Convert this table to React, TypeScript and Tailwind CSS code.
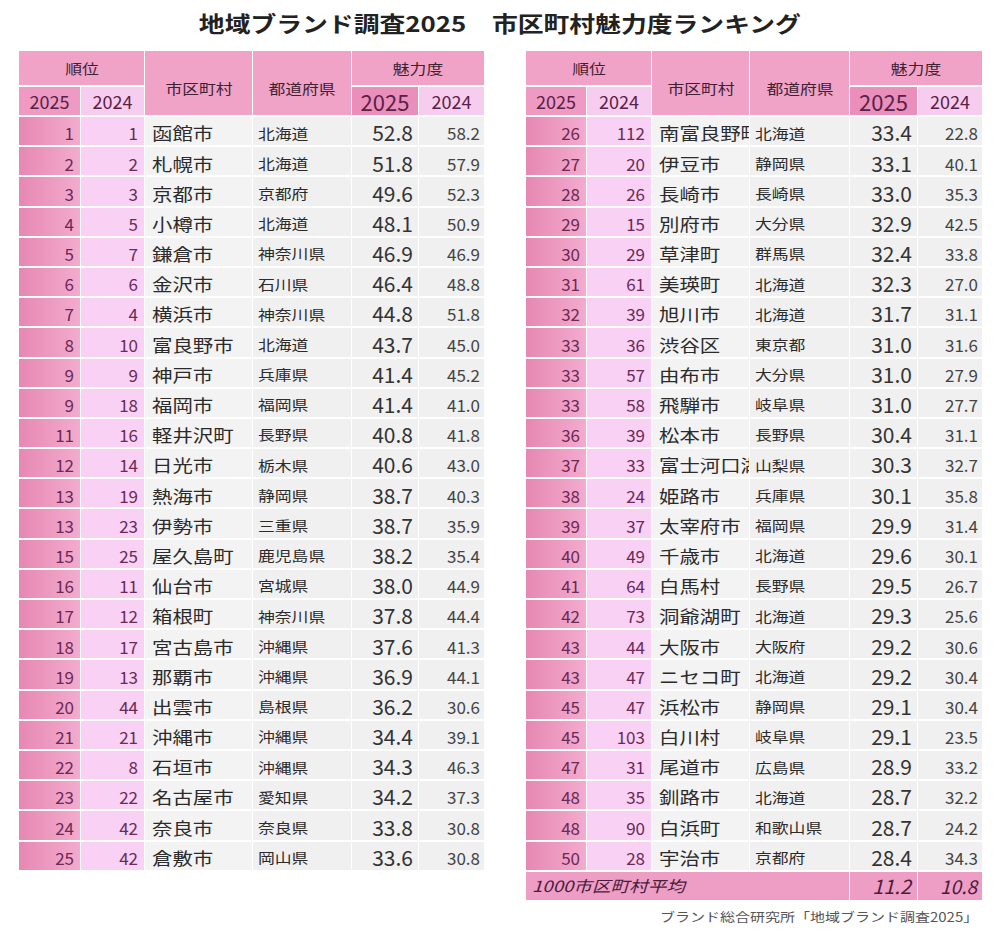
import React from "react";

type Row = [number, number, string, string, string, string];

const left: Row[] = [
  [1, 1, "函館市", "北海道", "52.8", "58.2"],
  [2, 2, "札幌市", "北海道", "51.8", "57.9"],
  [3, 3, "京都市", "京都府", "49.6", "52.3"],
  [4, 5, "小樽市", "北海道", "48.1", "50.9"],
  [5, 7, "鎌倉市", "神奈川県", "46.9", "46.9"],
  [6, 6, "金沢市", "石川県", "46.4", "48.8"],
  [7, 4, "横浜市", "神奈川県", "44.8", "51.8"],
  [8, 10, "富良野市", "北海道", "43.7", "45.0"],
  [9, 9, "神戸市", "兵庫県", "41.4", "45.2"],
  [9, 18, "福岡市", "福岡県", "41.4", "41.0"],
  [11, 16, "軽井沢町", "長野県", "40.8", "41.8"],
  [12, 14, "日光市", "栃木県", "40.6", "43.0"],
  [13, 19, "熱海市", "静岡県", "38.7", "40.3"],
  [13, 23, "伊勢市", "三重県", "38.7", "35.9"],
  [15, 25, "屋久島町", "鹿児島県", "38.2", "35.4"],
  [16, 11, "仙台市", "宮城県", "38.0", "44.9"],
  [17, 12, "箱根町", "神奈川県", "37.8", "44.4"],
  [18, 17, "宮古島市", "沖縄県", "37.6", "41.3"],
  [19, 13, "那覇市", "沖縄県", "36.9", "44.1"],
  [20, 44, "出雲市", "島根県", "36.2", "30.6"],
  [21, 21, "沖縄市", "沖縄県", "34.4", "39.1"],
  [22, 8, "石垣市", "沖縄県", "34.3", "46.3"],
  [23, 22, "名古屋市", "愛知県", "34.2", "37.3"],
  [24, 42, "奈良市", "奈良県", "33.8", "30.8"],
  [25, 42, "倉敷市", "岡山県", "33.6", "30.8"],
];

const right: Row[] = [
  [26, 112, "南富良野町", "北海道", "33.4", "22.8"],
  [27, 20, "伊豆市", "静岡県", "33.1", "40.1"],
  [28, 26, "長崎市", "長崎県", "33.0", "35.3"],
  [29, 15, "別府市", "大分県", "32.9", "42.5"],
  [30, 29, "草津町", "群馬県", "32.4", "33.8"],
  [31, 61, "美瑛町", "北海道", "32.3", "27.0"],
  [32, 39, "旭川市", "北海道", "31.7", "31.1"],
  [33, 36, "渋谷区", "東京都", "31.0", "31.6"],
  [33, 57, "由布市", "大分県", "31.0", "27.9"],
  [33, 58, "飛騨市", "岐阜県", "31.0", "27.7"],
  [36, 39, "松本市", "長野県", "30.4", "31.1"],
  [37, 33, "富士河口湖町", "山梨県", "30.3", "32.7"],
  [38, 24, "姫路市", "兵庫県", "30.1", "35.8"],
  [39, 37, "太宰府市", "福岡県", "29.9", "31.4"],
  [40, 49, "千歳市", "北海道", "29.6", "30.1"],
  [41, 64, "白馬村", "長野県", "29.5", "26.7"],
  [42, 73, "洞爺湖町", "北海道", "29.3", "25.6"],
  [43, 44, "大阪市", "大阪府", "29.2", "30.6"],
  [43, 47, "ニセコ町", "北海道", "29.2", "30.4"],
  [45, 47, "浜松市", "静岡県", "29.1", "30.4"],
  [45, 103, "白川村", "岐阜県", "29.1", "23.5"],
  [47, 31, "尾道市", "広島県", "28.9", "33.2"],
  [48, 35, "釧路市", "北海道", "28.7", "32.2"],
  [48, 90, "白浜町", "和歌山県", "28.7", "24.2"],
  [50, 28, "宇治市", "京都府", "28.4", "34.3"],
];

// the source image is stretched sideways, so CJK text gets a wider scale
function Wide({
  children,
  className = "",
}: {
  children: React.ReactNode;
  className?: string;
}) {
  return (
    <span className={`inline-block scale-x-[1.2] whitespace-nowrap ${className}`}>
      {children}
    </span>
  );
}

function RankTable({
  rows,
  cols,
  average,
}: {
  rows: Row[];
  cols: string;
  average?: boolean;
}) {
  const head = "flex items-center justify-center text-[#3d2233]";
  return (
    <div className={`grid ${cols} grid-rows-[34px_28px] auto-rows-[28.2px] gap-x-px gap-y-[2px]`}>
      {/* header */}
      <div className={`${head} col-span-2 bg-[#f0a2c7]`}>
        <Wide className="origin-center text-[14px]">順位</Wide>
      </div>
      <div className={`${head} row-span-2 bg-[#f0a2c7] pt-4 pb-[6px]`}>
        <Wide className="origin-center text-[14px]">市区町村</Wide>
      </div>
      <div className={`${head} row-span-2 bg-[#f0a2c7] pt-4 pb-[6px]`}>
        <Wide className="origin-center text-[14px]">都道府県</Wide>
      </div>
      <div className={`${head} col-span-2 bg-[#f0a2c7]`}>
        <Wide className="origin-center text-[14px]">魅力度</Wide>
      </div>
      <div className={`${head} bg-[#ee9ac3] text-[18px] text-[#5a2046]`}>2025</div>
      <div className={`${head} bg-[#f7cdef] text-[18px] text-[#5a2046]`}>2024</div>
      <div className={`${head} bg-[#ea8fbb] text-[22px] text-[#5a2046]`}>2025</div>
      <div className={`${head} bg-[#f7cdef] text-[18px] text-[#5a2046]`}>2024</div>

      {/* body */}
      {rows.map(([r25, r24, city, pref, s25, s24], i) => (
        <React.Fragment key={i}>
          <div className="flex items-center justify-end pr-[6px] pt-1 bg-gradient-to-r from-[#e688b3] to-[#f3abce] text-[17px] text-[#6b2a55]">
            {r25}
          </div>
          <div className="flex items-center justify-end pr-[6px] pt-1 bg-[#f8d1f4] text-[17px] text-[#6b2a55]">
            {r24}
          </div>
          <div className="flex items-center pl-[7px] pt-1 overflow-hidden bg-[#f3f3f3] text-[#2b2b2b]">
            <Wide className="origin-left text-[17px]">{city}</Wide>
          </div>
          <div className="flex items-center pl-[5px] pt-1 overflow-hidden bg-[#f0f0f0] text-[#2b2b2b]">
            <Wide className="origin-left text-[14px]">{pref}</Wide>
          </div>
          <div className="flex items-center justify-end pr-[5px] pt-1 bg-[#f0f0f0] text-[21px] text-[#333]">
            {s25}
          </div>
          <div className="flex items-center justify-end pr-[4px] pt-1 bg-[#f0f0f0] text-[17px] text-[#444]">
            {s24}
          </div>
        </React.Fragment>
      ))}

      {average && (
        <>
          <div className="col-span-4 flex items-center pl-[6px] bg-[#ee9dc5] text-[#4a1c3c] italic">
            <Wide className="origin-left text-[15.5px]">1000市区町村平均</Wide>
          </div>
          <div className="flex items-center justify-end pr-[6px] bg-[#ee9dc5] text-[20px] italic text-[#4a1c3c]">
            11.2
          </div>
          <div className="flex items-center justify-end pr-[5px] bg-[#ee9dc5] text-[19px] italic text-[#4a1c3c]">
            10.8
          </div>
        </>
      )}
    </div>
  );
}

export default function App() {
  return (
    <div className="w-[1000px] h-[937px] bg-white font-['Noto_Sans_CJK_JP',sans-serif] flex flex-col overflow-hidden">
      <div className="h-[51px] flex items-center justify-center pb-1">
        <Wide className="origin-center text-[21.5px] font-bold text-[#222]">
          地域ブランド調査2025　市区町村魅力度ランキング
        </Wide>
      </div>
      <div className="flex flex-row items-start pl-[19px] gap-[42px]">
        <RankTable rows={left} cols="grid-cols-[61px_63px_107px_98px_66px_65px]" />
        <div className="flex flex-col">
          <RankTable
            rows={right}
            cols="grid-cols-[60px_64px_97px_99px_67px_64px]"
            average
          />
          <div className="flex justify-end pr-[4px] pt-[8px] text-[#555]">
            <Wide className="origin-right text-[12.5px]">
              ブランド総合研究所「地域ブランド調査2025」
            </Wide>
          </div>
        </div>
      </div>
    </div>
  );
}
